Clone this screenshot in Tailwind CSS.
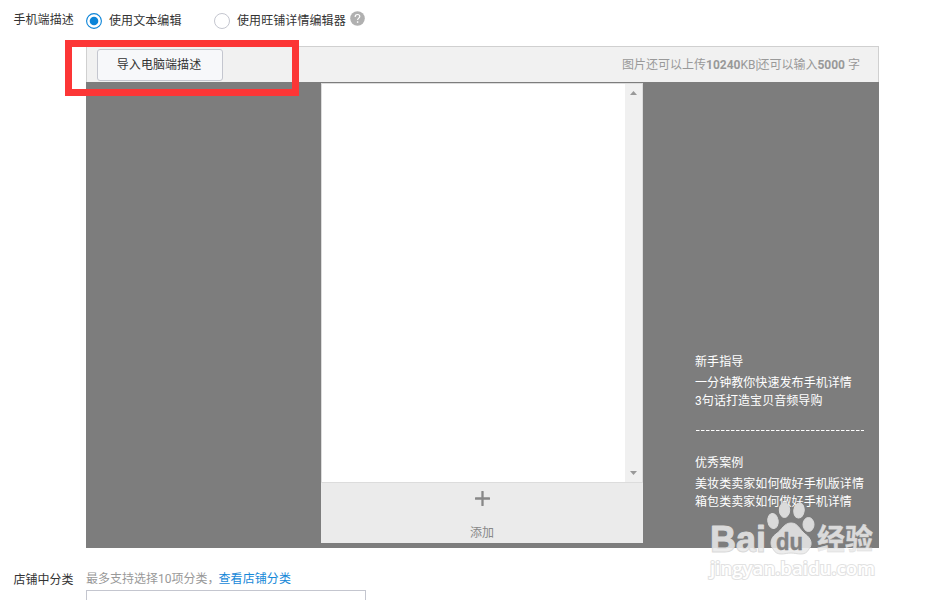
<!DOCTYPE html>
<html lang="zh-CN">
<head>
<meta charset="utf-8">
<title>手机端描述</title>
<script src="https://cdn.jsdelivr.net/npm/@tailwindcss/browser@4"></script>
</head>
<body class="relative h-[600px] w-[925px] overflow-hidden bg-white font-[Roboto,'Noto_Sans_CJK_SC',sans-serif] text-[12px] leading-[18px] text-[#333]">
<div class="flex h-[46px] pt-[11px] whitespace-nowrap">
  <div class="w-[86px] pl-[13.500px] tracking-[.05px]">手机端描述</div>
  <div class="flex w-[128px]">
    <svg class="mt-[2px] h-4 w-4 shrink-0" viewBox="0 0 16 16"><circle cx="8" cy="8" r="7.4" fill="#fff" stroke="#0b84d8" stroke-width="1.1"/><circle cx="8" cy="8" r="4.3" fill="#0b84d8"/></svg>
    <span class="ml-[7px] pt-px tracking-[.08px]">使用文本编辑</span>
  </div>
  <div class="flex">
    <svg class="mt-[2px] h-4 w-4 shrink-0" viewBox="0 0 16 16"><circle cx="8" cy="8" r="7.5" fill="#fff" stroke="#c4c6cf"/></svg>
    <span class="ml-[7px] w-[108px] pt-px tracking-[.08px]">使用旺铺详情编辑器</span>
    <svg class="ml-[5px] h-[15px] w-[15px] shrink-0" viewBox="0 0 15 15"><circle cx="7.5" cy="7.5" r="7.3" fill="#b0b0b0"/><path d="M5.2 6.1V5.6C5.2 4.2 6.2 3.5 7.5 3.5S9.8 4.3 9.8 5.4C9.8 7 7.6 7.2 7.6 9" fill="none" stroke="#fff" stroke-width="1.2"/><path d="M6.900 10.3h1.4v1.5H6.900z" fill="#fff"/></svg>
  </div>
</div>
<main class="ml-[86px] h-[502px] w-[793px] bg-[#7d7d7d]">
  <div class="flex h-9 items-center justify-between border border-b-0 border-[#d0d0d0] bg-[#f1f1f1] pr-[18px] pl-[10px]">
    <button class="mt-px h-8 w-[126px] rounded-[3px] border border-[#c4c6cf] bg-[#f7f8fa] pr-[2px] tracking-[.08px]">导入电脑端描述</button>
    <div class="whitespace-nowrap pt-px text-[#999]">图片还可以上传<b>10240</b>KB|<span class="-ml-px">还可以输入</span><b>5000</b> 字</div>
  </div>
  <div class="flex h-[466px]">
    <div class="w-[235px]"></div>
    <div class="mt-px h-[460px] w-[322px] bg-[#ebebeb]">
      <div class="flex h-[400px] justify-end border border-[#dcdcdc] bg-white">
        <div class="flex w-[17px] flex-col items-center justify-between bg-[#f0f0f0] pt-[7px] pb-[7px]">
          <svg class="h-1 w-[7px]" viewBox="0 0 7 4"><path d="M0 4L3.5 0 7 4z" fill="#999"/></svg>
          <svg class="h-1 w-[7px]" viewBox="0 0 7 4"><path d="M0 0h7L3.5 4z" fill="#999"/></svg>
        </div>
      </div>
      <div class="flex flex-col items-center pt-2 text-[#888]">
        <svg class="h-[15px] w-[15px]" viewBox="0 0 15 15"><path d="M7.5 .8v13.4M.8 7.5h13.4" stroke="#888" stroke-width="2.300" stroke-linecap="round"/></svg>
        <span class="mt-[18px]">添加</span>
      </div>
    </div>
    <div class="ml-[52px] w-[169px] pt-[271px] tracking-[.07px] whitespace-nowrap text-white">
      <div>新手指导</div>
      <div class="mt-[3px]">一分钟教你快速发布手机详情</div>
      <div>3句话打造宝贝音频导购</div>
      <svg class="mt-5 ml-px block h-px w-[168px]" viewBox="0 0 168 1"><path d="M0 .5h168" stroke="#fff" stroke-dasharray="3.5 1.5"/></svg>
      <div class="mt-[23px]">优秀案例</div>
      <div class="mt-[3px]">美妆类卖家如何做好手机版详情</div>
      <div>箱包类卖家如何做好手机详情</div>
    </div>
  </div>
</main>
<div class="flex h-[42px] pt-[22px] whitespace-nowrap">
  <div class="w-[86px] pt-px pl-[13.500px]">店铺中分类</div>
  <div class="text-[#999]">最多支持选择10项分类，<a class="-ml-px tracking-[.08px] text-[#1688d8]">查看店铺分类</a></div>
</div>
<div class="ml-[86px] h-[30px] w-[280px] border border-[#c4c6cf]"></div>

<div class="pointer-events-none absolute top-10 left-[65px] h-14 w-[234px] border-[7px] border-[#fc3636]"></div>
<svg class="pointer-events-none absolute top-[495px] left-[700px] h-[90px] w-[190px]" viewBox="0 0 190 90">
  <defs>
    <linearGradient id="mark" gradientUnits="userSpaceOnUse" x1="0" y1="0" x2="0" y2="90"><stop offset=".588" stop-color="#dadada"/><stop offset=".59" stop-color="#ececec"/></linearGradient>
  </defs>
  <g fill="url(#mark)" stroke="#dadada" stroke-width="1" stroke-linejoin="round">
    <text x="10" y="57" font-family="Liberation Sans, sans-serif" font-weight="700" font-size="37" textLength="56" lengthAdjust="spacingAndGlyphs">Bai</text>
    <ellipse cx="73" cy="26" rx="5.2" ry="7.5" transform="rotate(-8 73 26)"/>
    <ellipse cx="84.5" cy="15" rx="5.2" ry="7.5"/>
    <ellipse cx="99" cy="15.500" rx="5.2" ry="7.5" transform="rotate(6 99 15.500)"/>
    <ellipse cx="108.500" cy="29.500" rx="5.500" ry="7"/>
    <path d="M91 28C84 28 82 35 76 39C70 43 70 50 73 54C77 62 85 58 91 58S105 62 109 54C113 49 111 43 105 39C99 34 98 28 91 28Z"/>
    <text x="117" y="55" stroke-width=".4" font-family="Noto Sans CJK SC, sans-serif" font-weight="700" font-size="29" textLength="56" lengthAdjust="spacingAndGlyphs">经验</text>
  </g>
  <text x="76" y="55" fill="#828282" stroke="#828282" stroke-width=".4" font-family="Liberation Sans, sans-serif" font-weight="700" font-size="24" textLength="27" lengthAdjust="spacingAndGlyphs">du</text>
  <text x="10" y="79.500" fill="#fff" stroke="#e2e2e2" stroke-width="2" paint-order="stroke" font-family="Open Sans, sans-serif" font-weight="600" font-size="18" textLength="165" lengthAdjust="spacingAndGlyphs">jingyan.baidu.com</text>
</svg>
</body>
</html>
